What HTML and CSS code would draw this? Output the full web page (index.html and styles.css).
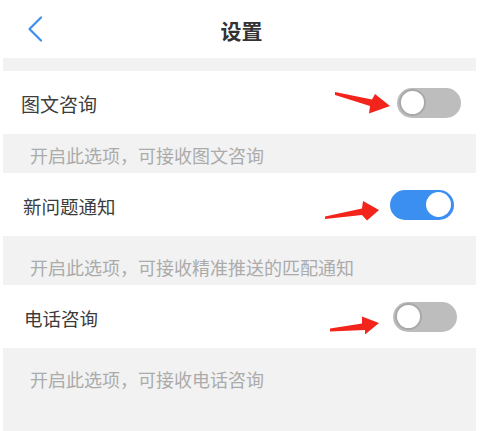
FILE: index.html
```html
<!DOCTYPE html>
<html lang="zh-CN">
<head>
<meta charset="utf-8">
<title>设置</title>
<link rel="stylesheet" href="styles.css">
</head>
<body>
<div class="page">
  <header class="header">
    <div class="header-left">
      <svg class="back" width="16" height="26" viewBox="0 0 16 26"><polyline points="14,1.5 2.5,13 14,24.5" fill="none" stroke="#3d8fe8" stroke-width="2.2" stroke-linecap="round" stroke-linejoin="round"/></svg>
    </div>
    <h1 class="title">设置</h1>
    <div class="header-right"></div>
  </header>

  <section class="group group-first">
    <div class="row row-1">
      <span class="label">图文咨询</span>
      <span class="switch"><span class="knob"></span></span>
      <svg class="arrow arrow-1" width="60" height="28" viewBox="0 0 60 28"><polygon points="2,4 39,11.5 42,6 57,18 36,25.5 37,18 2,7" fill="#f3241c"/></svg>
    </div>
    <p class="desc desc-1">开启此选项，可接收图文咨询</p>
  </section>

  <section class="group">
    <div class="row row-2">
      <span class="label">新问题通知</span>
      <span class="switch on"><span class="knob"></span></span>
      <svg class="arrow arrow-2" width="60" height="26" viewBox="0 0 60 26"><polygon points="2,17.5 39,9.5 40,2 56,11 44,21.5 39,16 2,20" fill="#f3241c"/></svg>
    </div>
    <p class="desc desc-2">开启此选项，可接收精准推送的匹配通知</p>
  </section>

  <section class="group">
    <div class="row row-3">
      <span class="label">电话咨询</span>
      <span class="switch"><span class="knob"></span></span>
      <svg class="arrow arrow-3" width="56" height="24" viewBox="0 0 56 24"><polygon points="2,14.5 34,9.5 34,2.5 51,9 37,20.5 37,16 2,17.5" fill="#f3241c"/></svg>
    </div>
    <p class="desc desc-3">开启此选项，可接收电话咨询</p>
  </section>
</div>
</body>
</html>
```
FILE: styles.css
```css
* { box-sizing: border-box; }
html, body { margin: 0; padding: 0; background: #ffffff; }
body {
  font-family: "Noto Sans CJK SC", "Noto Sans", sans-serif;
  width: 480px;
  height: 431px;
  overflow: hidden;
}
.page {
  margin: 0 4px 0 3px;
  height: 431px;
  background: #f2f2f2;
}
.header {
  height: 58px;
  background: #ffffff;
  display: grid;
  grid-template-columns: 1fr auto 1fr;
  align-items: center;
}
.header-left {
  padding-left: 24px;
  display: flex;
  align-items: center;
}
.back { display: block; }
.title {
  margin: 0;
  font-size: 21px;
  font-weight: 600;
  color: #333333;
  line-height: 28px;
  padding-left: 4px;
  padding-top: 2px;
}
.group-first { margin-top: 13px; }
.row {
  position: relative;
  height: 63px;
  background: #ffffff;
  display: flex;
  align-items: center;
  justify-content: space-between;
  padding-left: 18px;
}
.row-1 { padding-right: 15px; }
.row-2 { padding-right: 22px; padding-left: 20px; }
.row-3 { padding-right: 19px; padding-left: 21px; }
.label {
  font-size: 19px;
  color: #3c3c3c;
  line-height: 26px;
  padding-top: 3px;
}
.row-2 .label, .row-3 .label { font-size: 18.5px; }
.switch {
  position: relative;
  width: 64px;
  height: 30px;
  border-radius: 15px;
  background: #bdbdbd;
  display: flex;
  align-items: center;
  padding: 0 2px;
}
.switch .knob {
  width: 27px;
  height: 27px;
  border-radius: 50%;
  background: #ffffff;
  border: 2px solid #a9a9a9;
}
.switch.on {
  background: #3a8ff0;
  justify-content: flex-end;
  padding: 0 3px;
}
.switch.on .knob {
  width: 25px;
  height: 25px;
  border: none;
}
.arrow { position: absolute; display: block; }
.arrow-1 { left: 330px; top: 17px; }
.arrow-2 { left: 320px; top: 26px; }
.arrow-3 { left: 325px; top: 29px; }
.desc {
  margin: 0;
  font-size: 18px;
  color: #ababab;
  line-height: 24px;
  padding-left: 27px;
}
.desc-1 { height: 39px; padding-top: 9px; }
.desc-2 { height: 49px; padding-top: 19px; }
.desc-3 { padding-top: 19px; }
```
